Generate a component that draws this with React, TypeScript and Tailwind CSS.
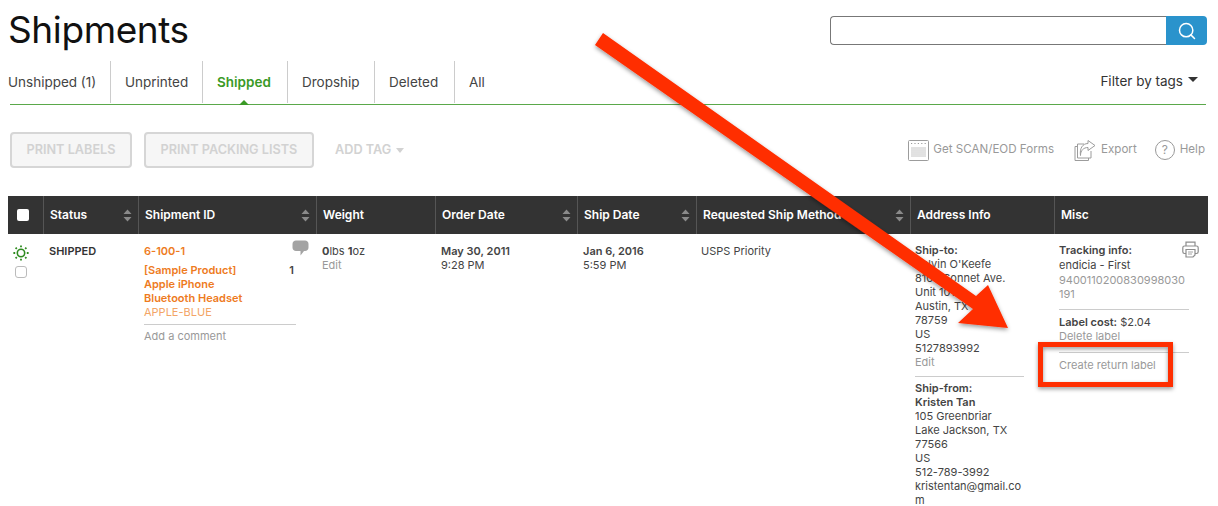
import React from "react";
import { Search } from "lucide-react";

const tabs = ["Unshipped (1)", "Unprinted", "Shipped", "Dropship", "Deleted", "All"];
const tabWidths = ["w-[103px]", "w-[92px]", "w-[85px]", "w-[87px]", "w-[80px]", "w-[60px]"];

const columns = [
  { title: "Status", sort: true },
  { title: "Shipment ID", sort: true },
  { title: "Weight", sort: false },
  { title: "Order Date", sort: true },
  { title: "Ship Date", sort: true },
  { title: "Requested Ship Method", sort: true },
  { title: "Address Info", sort: false },
  { title: "Misc", sort: false },
];

function SortIcon() {
  return (
    <svg width="9" height="13" viewBox="0 0 9 13" className="shrink-0">
      <path d="M4.5 0.5 L8.5 5 L0.5 5 Z" fill="#8a8a8a" />
      <path d="M0.5 8 L8.5 8 L4.5 12.5 Z" fill="#8a8a8a" />
    </svg>
  );
}

function ShippedIcon() {
  return (
    <svg width="16" height="16" viewBox="0 0 16 16" fill="none" stroke="#2e8b1f">
      <circle cx="8" cy="8" r="3.7" strokeWidth="1.6" />
      <path
        d="M8 0.4V2.2M8 13.8V15.6M0.4 8H2.2M13.8 8H15.6M2.6 2.6L3.8 3.8M12.2 12.2L13.4 13.4M2.6 13.4L3.8 12.2M12.2 3.8L13.4 2.6"
        strokeWidth="1.8"
      />
    </svg>
  );
}

function FormsIcon() {
  return (
    <svg width="21" height="21" viewBox="0 0 21 21" fill="none">
      <rect x="0.5" y="0.5" width="20" height="20" rx="1" fill="#fff" stroke="#9c9c9c" />
      <path d="M3 3.5H18" stroke="#9c9c9c" strokeDasharray="1.2 2.2" />
      <path d="M3 8h15M3 10h15M3 12h15M3 14h15M3 16h15" stroke="#c4c4c4" />
    </svg>
  );
}

function ExportIcon() {
  return (
    <svg width="22" height="21" viewBox="0 0 22 21" fill="none" stroke="#9c9c9c" strokeWidth="1">
      <path d="M3.5 6.5H1V20.5H14.5V18" />
      <path d="M10 4H3.5V18H17V11" />
      <path d="M6.5 15.5C6.5 10.5 9.5 7.5 14 7.5V10.5L21 5.5L14 0.5V3.5C8.5 3.5 5.5 8.5 6.5 15.5Z" fill="#fff" />
    </svg>
  );
}

function PrinterIcon() {
  return (
    <svg width="17" height="17" viewBox="0 0 17 17" fill="none" stroke="#8d8d8d" strokeWidth="1.2" className="absolute right-[9px] top-[7px]">
      <path d="M4 5V1.2H13V5" />
      <path d="M4 12.5H2.5C1.5 12.5 0.8 11.8 0.8 10.8V6.8C0.8 5.8 1.5 5 2.5 5H14.5C15.5 5 16.2 5.8 16.2 6.8V10.8C16.2 11.8 15.5 12.5 14.5 12.5H13" />
      <path d="M4 8.5H13V14L11 16H4Z" />
      <path d="M6 11H11M6 13H10" strokeWidth="0.8" />
    </svg>
  );
}

function CommentIcon() {
  return (
    <svg width="17" height="16" viewBox="0 0 17 16">
      <path d="M4 0.5H13C15 0.5 16.5 2 16.5 4V7.5C16.5 9.5 15 11 13 11H12L8.5 15.5L8.5 11H4C2 11 0.5 9.5 0.5 7.5V4C0.5 2 2 0.5 4 0.5Z" fill="#a3a3a3" />
    </svg>
  );
}

function Overlay() {
  return (
    <svg width="1218" height="506" viewBox="0 0 1218 506" className="absolute left-0 top-0 pointer-events-none">
      <defs>
        <filter id="drop" x="-10%" y="-10%" width="120%" height="120%">
          <feDropShadow dx="0" dy="2" stdDeviation="2" floodColor="#000" floodOpacity="0.4" />
        </filter>
      </defs>
      <g filter="url(#drop)" fill="#ff2d00">
        <path d="M603 33L976 296L988 285L1008 328L958 323L973 309L595 45Z" />
        <path fillRule="evenodd" d="M1038 342H1173V387H1038ZM1043 347V382H1168V347Z" />
      </g>
    </svg>
  );
}

export default function App() {
  return (
    <div
      className="relative w-[1218px] h-[506px] overflow-hidden bg-white text-[#333]"
      style={{ fontFamily: "Inter, 'Liberation Sans', sans-serif" }}
    >
      <div className="pl-2 pr-3">
        {/* header */}
        <div className="flex justify-between items-start h-[61px]">
          <h1 className="text-[37px] leading-[60px] text-[#111] tracking-[-0.4px]">Shipments</h1>
          <div className="flex mt-4 w-[377px] h-[29px] mr-[-1px]">
            <div className="flex-1 border border-[#777] border-r-0 rounded-l-[4px]" />
            <div className="w-[41px] bg-[#2a93cc] rounded-r-[4px] flex items-center justify-center">
              <Search size={20} color="#fff" strokeWidth={1.8} />
            </div>
          </div>
        </div>

        {/* tabs */}
        <div className="flex justify-between h-[44px] ml-[2px] border-b border-[#5aa84a]">
          <div className="flex -ml-[2px]">
            {tabs.map((tab, i) => (
              <div
                key={tab}
                className={`relative flex items-center h-[42px] text-[13.5px] ${tabWidths[i]} ${
                  i === 0 ? "" : "pl-[14px]"
                } ${i < 5 ? "border-r border-[#ccc]" : ""} ${
                  tab === "Shipped" ? "font-semibold text-[#3a9a26]" : "text-[#444]"
                }`}
              >
                <span className="pt-[1px] whitespace-nowrap">{tab}</span>
                {tab === "Shipped" && (
                  <span className="absolute left-[36px] bottom-[-2px] w-0 h-0 border-x-[5px] border-x-transparent border-b-[5px] border-b-[#3a9a26]" />
                )}
              </div>
            ))}
          </div>
          <div className="flex items-center gap-[5px] h-[40px] text-[13.5px] text-[#333] pr-[8px]">
            Filter by tags
            <span className="w-0 h-0 mb-1 border-x-[5px] border-x-transparent border-t-[5px] border-t-[#333]" />
          </div>
        </div>

        {/* actions */}
        <div className="flex justify-between items-center h-[91px] pl-[2px] pb-[1px]">
          <div className="flex items-center text-[12.7px] font-semibold text-[#d2d2d2]">
            <div className="w-[122px] h-[36px] mr-[12px] flex items-center justify-center bg-[#f6f6f6] border-2 border-[#d6d6d6] rounded-[4px]">
              PRINT LABELS
            </div>
            <div className="w-[170px] h-[36px] mr-[21px] flex items-center justify-center bg-[#f6f6f6] border-2 border-[#d6d6d6] rounded-[4px]">
              PRINT PACKING LISTS
            </div>
            <span>ADD TAG</span>
            <span className="w-0 h-0 ml-[5px] border-x-[4.5px] border-x-transparent border-t-[5px] border-t-[#d2d2d2]" />
          </div>
          <div className="flex items-center text-[11.6px] text-[#999]">
            <FormsIcon />
            <span className="ml-[4px] mr-[20px]">Get SCAN/EOD Forms</span>
            <ExportIcon />
            <span className="ml-[5px] mr-[18px]">Export</span>
            <span className="w-[20px] h-[20px] rounded-full border border-[#999] flex items-center justify-center text-[12px]">?</span>
            <span className="ml-[5px] pr-[1px]">Help</span>
          </div>
        </div>

        {/* table */}
        <div className="w-[1200px] text-[11px] leading-[14px]">
          <div className="grid grid-cols-[35px_95px_178px_119px_142px_119px_214px_144px_154px] h-[38px] bg-[#333] text-white font-semibold text-[12px]">
            <div className="flex items-center pl-[9px]">
              <span className="w-3 h-3 bg-white rounded-[2px]" />
            </div>
            {columns.map((c) => (
              <div key={c.title} className="flex items-center justify-between pl-[6px] pr-[6px] border-l border-[#555]">
                <span className="whitespace-nowrap">{c.title}</span>
                {c.sort && <SortIcon />}
              </div>
            ))}
          </div>

          <div className="grid grid-cols-[35px_95px_178px_119px_142px_119px_214px_144px_154px] text-[#444]">
            <div className="flex flex-col items-center pt-[11px] gap-[5px] mr-[9px]">
              <ShippedIcon />
              <span className="w-3 h-3 border border-[#bbb] rounded-[3px]" />
            </div>
            <div className="pt-[10px] pl-[6px] font-semibold text-[#333]">SHIPPED</div>
            <div className="pl-[6px] pr-[20px] pt-[10px] relative">
              <div className="font-semibold text-[#ee7b1e]">6-100-1</div>
              <div className="font-semibold text-[#ee7b1e] mt-[5px]">
                [Sample Product]
                <br />
                Apple iPhone
                <br />
                Bluetooth Headset
              </div>
              <div className="text-[#f3a566]">APPLE-BLUE</div>
              <div className="mt-[5px] pt-[4px] border-t border-[#ccc] text-[#999]">Add a comment</div>
              <div className="absolute right-[7px] top-[6px]">
                <CommentIcon />
              </div>
              <div className="absolute right-[22px] top-[29px] font-semibold text-[#444]">1</div>
            </div>
            <div className="pl-[6px] pt-[10px]">
              <div>
                <b>0</b>lbs <b>1</b>oz
              </div>
              <div className="text-[#999]">Edit</div>
            </div>
            <div className="pl-[6px] pt-[10px]">
              <div className="font-semibold">May 30, 2011</div>
              <div>9:28 PM</div>
            </div>
            <div className="pl-[6px] pt-[10px]">
              <div className="font-semibold">Jan 6, 2016</div>
              <div>5:59 PM</div>
            </div>
            <div className="pl-[5px] pt-[10px]">USPS Priority</div>
            <div className="pl-[5px] pr-[30px] pt-[9px]">
              <div className="font-semibold">Ship-to:</div>
              <div>Kelvin O'Keefe</div>
              <div>8100 Sonnet Ave.</div>
              <div>Unit 101</div>
              <div>Austin, TX</div>
              <div>78759</div>
              <div>US</div>
              <div>5127893992</div>
              <div className="text-[#999]">Edit</div>
              <div className="mt-[7px] pt-[4px] border-t border-[#ccc] font-semibold whitespace-nowrap">
                Ship-from:
                <br />
                Kristen Tan
              </div>
              <div>105 Greenbriar</div>
              <div>Lake Jackson, TX</div>
              <div>77566</div>
              <div>US</div>
              <div>512-789-3992</div>
              <div>kristentan@gmail.co</div>
              <div>m</div>
            </div>
            <div className="relative pl-[5px] pr-[19px] pt-[9px]">
              <div className="font-semibold">Tracking info:</div>
              <div className="mt-[1px]">endicia - First</div>
              <div className="mt-[1px] text-[#999] whitespace-nowrap">
                9400110200830998030
                <br />
                191
              </div>
              <div className="mt-[8px] pt-[5px] border-t border-[#ccc]">
                <b className="font-semibold">Label cost:</b> $2.04
              </div>
              <div className="text-[#999]">Delete label</div>
              <div className="mt-[9px] pt-[5px] border-t border-[#ccc] text-[#999]">Create return label</div>
              <PrinterIcon />
            </div>
          </div>
        </div>
      </div>
      <Overlay />
    </div>
  );
}
